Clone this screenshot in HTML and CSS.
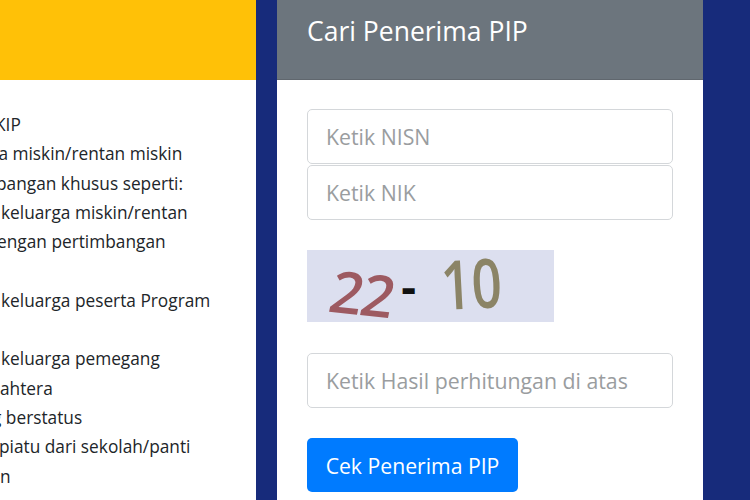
FILE: index.html
```html
<!DOCTYPE html>
<html lang="id">
<head>
<meta charset="utf-8">
<title>Cari Penerima PIP</title>
<link rel="stylesheet" href="styles.css">
</head>
<body>
<div class="page">
  <section class="info">
    <div class="info-head"></div>
    <div class="info-body">
      <div class="ln o5">KIP</div>
      <div class="ln o11">ga miskin/rentan miskin</div>
      <div class="ln o4">bangan khusus seperti:</div>
      <div class="ln p1">keluarga miskin/rentan</div>
      <div class="ln o3">engan pertimbangan</div>
      <div class="ln">&nbsp;</div>
      <div class="ln p1">keluarga peserta Program</div>
      <div class="ln">&nbsp;</div>
      <div class="ln p1">keluarga pemegang</div>
      <div class="ln">ahtera</div>
      <div class="ln o8">g berstatus</div>
      <div class="ln o1">piatu dari sekolah/panti</div>
      <div class="ln">n</div>
    </div>
  </section>
  <section class="card">
    <div class="card-head"><h1 class="card-title">Cari Penerima PIP</h1></div>
    <form class="card-body">
      <input class="field" type="text" placeholder="Ketik NISN">
      <input class="field field-tight" type="text" placeholder="Ketik NIK">
      <div class="captcha">
        <span class="cap-a">22</span><span class="cap-minus">-</span><span class="cap-b">10</span>
      </div>
      <input class="field" type="text" placeholder="Ketik Hasil perhitungan di atas">
      <button class="btn" type="button">Cek Penerima PIP</button>
    </form>
  </section>
</div>
</body>
</html>
```

FILE: styles.css
```css
* { box-sizing: border-box; }
html, body {
  margin: 0;
  padding: 0;
}
body {
  width: 750px;
  height: 500px;
  overflow: hidden;
  background: #172b7b;
  font-family: "Open Sans", "Noto Sans", sans-serif;
}
.page {
  display: flex;
  gap: 21px;
  height: 500px;
}
.info {
  width: 256px;
  background: #ffffff;
  display: flex;
  flex-direction: column;
  overflow: hidden;
}
.info-head {
  height: 80px;
  background: #ffc107;
  flex: none;
}
.info-body {
  padding-top: 30px;
  color: #212529;
  font-size: 17.3px;
  line-height: 29.3px;
}
.ln { white-space: nowrap; }
.o1 { margin-left: -1px; }
.o3 { margin-left: -3px; }
.o4 { margin-left: -4px; }
.o5 { margin-left: -5px; }
.o8 { margin-left: -8px; }
.o11 { margin-left: -11px; }
.p1 { margin-left: 1px; }

.card {
  width: 426px;
  background: #ffffff;
  display: flex;
  flex-direction: column;
}
.card-head {
  height: 80px;
  background: #6c757d;
  border-bottom: 1px solid #60676e;
  padding: 18px 0 0 30px;
  flex: none;
}
.card-title {
  margin: 0;
  color: #ffffff;
  font-weight: 400;
  font-size: 26.5px;
  line-height: 1;
}
.card-body {
  padding: 29px 29px 0 30px;
  display: flex;
  flex-direction: column;
  align-items: flex-start;
  margin: 0;
}
.field {
  width: 366px;
  height: 55px;
  border: 1px solid #d4d7da;
  border-radius: 5px;
  padding: 0 18px;
  font-family: "Open Sans", "Noto Sans", sans-serif;
  font-size: 21.3px;
  color: #495057;
  background: #fff;
  outline: none;
}
.field::placeholder { color: #9a9d9f; }
.field-tight { margin-top: 1px; }
.captcha {
  margin-top: 30px;
  width: 247px;
  height: 72px;
  background: #dcdfef;
  font-family: "Open Sans", "Noto Sans", sans-serif;
  display: flex;
  align-items: flex-start;
  padding-left: 24px;
  margin-bottom: 31px;
}
.cap-a {
  display: inline-block;
  color: #9d5a61;
  font-size: 58px;
  font-weight: 600;
  line-height: 1;
  margin-top: 14px;
  transform: rotate(6deg) skewX(-6deg);
  letter-spacing: -2px;
}
.cap-minus {
  display: inline-block;
  color: #111;
  font-size: 46px;
  font-weight: 700;
  line-height: 1;
  margin-top: 13px;
  margin-left: 8px;
}
.cap-b {
  display: inline-block;
  color: #8b8466;
  font-size: 68px;
  font-weight: 600;
  line-height: 1;
  margin-top: 0;
  margin-left: 25px;
  transform: rotate(-3deg) scaleX(0.78);
  transform-origin: left center;
}
.btn {
  margin-top: 30px;
  width: 211px;
  height: 54px;
  background: #007bff;
  border: none;
  border-radius: 5px;
  color: #ffffff;
  font-family: "Open Sans", "Noto Sans", sans-serif;
  font-size: 21.2px;
  padding: 0;
}
```
